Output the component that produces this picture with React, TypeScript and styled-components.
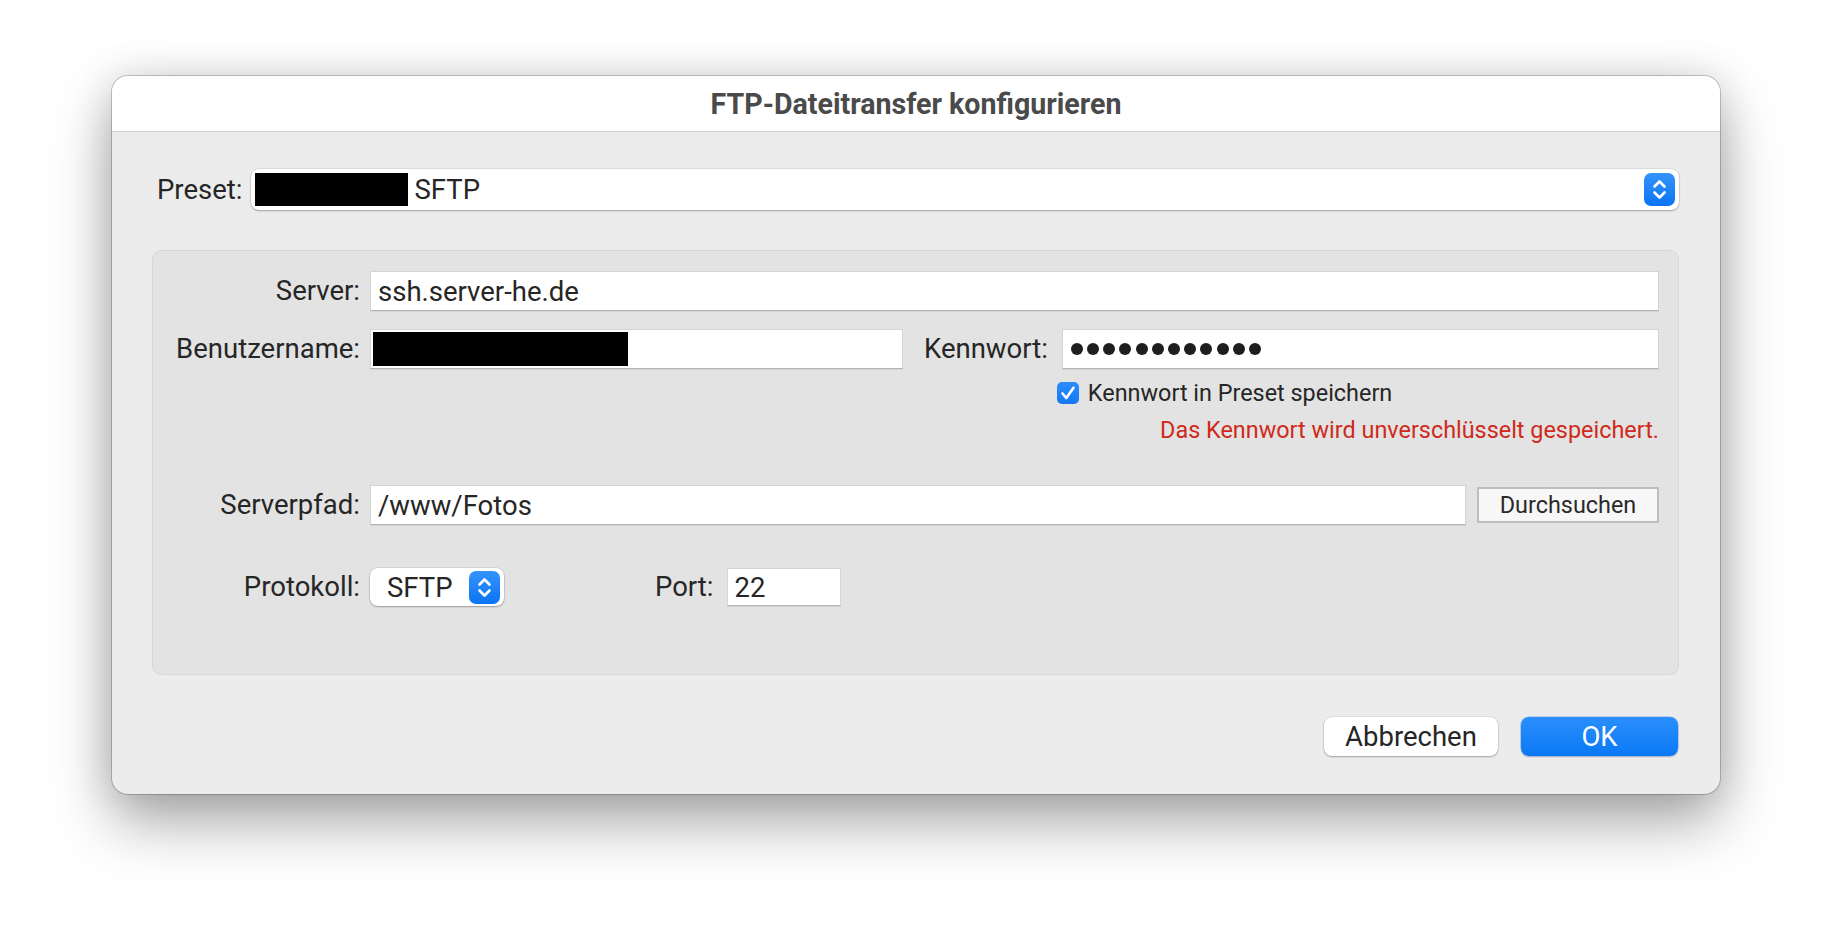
import React from "react";
import styled, { createGlobalStyle } from "styled-components";

const GlobalStyle = createGlobalStyle`
  html, body { margin: 0; padding: 0; background: #ffffff; }
  body { font-family: Roboto, "Liberation Sans", sans-serif; color: #262626; }
  * { box-sizing: border-box; }
`;

const Page = styled.div`
  width: 1832px;
  height: 942px;
  display: flex;
  justify-content: center;
  align-items: flex-start;
  padding-top: 76px;
  overflow: hidden;
  background: #ffffff;
`;

const Dialog = styled.div`
  width: 1608px;
  height: 718px;
  background: #ececec;
  border-radius: 16px;
  overflow: hidden;
  display: flex;
  flex-direction: column;
  box-shadow: 0 0 0 1px rgba(0, 0, 0, 0.2), 0 28px 60px rgba(0, 0, 0, 0.34),
    0 0 40px rgba(0, 0, 0, 0.12);
`;

const TitleBar = styled.div`
  flex: none;
  height: 56px;
  background: #ffffff;
  border-bottom: 1px solid #cdcdcd;
  display: flex;
  align-items: center;
  justify-content: center;
  font-size: 28.6px;
  font-weight: 700;
  color: #4a4a4a;
`;

const Body = styled.div`
  flex: 1;
  display: flex;
  flex-direction: column;
  padding: 37px 41px 38px 40px;
`;

const PresetRow = styled.div`
  display: flex;
  align-items: center;
  gap: 9px;
  padding-left: 5px;
  height: 41px;
`;

const Label = styled.div<{ $width?: number }>`
  flex: none;
  width: ${(p) => (p.$width ? `${p.$width}px` : "auto")};
  text-align: right;
  font-size: 27.5px;
  line-height: 40px;
  color: #262626;
  white-space: nowrap;
`;

const Popup = styled.div<{ $width?: number; $height: number; $pad: number; $ml?: number }>`
  flex: ${(p) => (p.$width ? "none" : "1")};
  width: ${(p) => (p.$width ? `${p.$width}px` : "auto")};
  height: ${(p) => p.$height}px;
  margin-left: ${(p) => p.$ml ?? 0}px;
  background: #ffffff;
  border-radius: 8px;
  box-shadow: 0 0 0 0.5px rgba(0, 0, 0, 0.12), 0 1px 2px rgba(0, 0, 0, 0.28);
  display: flex;
  align-items: center;
  padding: 0 4px 0 ${(p) => p.$pad}px;
  font-size: 27.5px;
  color: #262626;
`;

const PopupText = styled.span`
  flex: 1;
  white-space: nowrap;
`;

const Redacted = styled.span<{ $width: number; $height: number }>`
  flex: none;
  display: inline-block;
  width: ${(p) => p.$width}px;
  height: ${(p) => p.$height}px;
  background: #000000;
  margin-right: 6px;
`;

const Stepper = styled.span`
  flex: none;
  width: 31px;
  height: 33px;
  border-radius: 7px;
  background: linear-gradient(#3593fb, #0b74f3);
  display: flex;
  align-items: center;
  justify-content: center;
`;

const Group = styled.div`
  margin-top: 40px;
  height: 425px;
  background: #e3e3e3;
  border: 1px solid #d8d8d8;
  border-radius: 9px;
  padding: 20px 19px 0 0;
  display: flex;
  flex-direction: column;
`;

const Row = styled.div<{ $top?: number; $center?: boolean }>`
  display: flex;
  align-items: ${(p) => (p.$center ? "center" : "flex-start")};
  margin-top: ${(p) => p.$top ?? 0}px;
`;

const Field = styled.div<{ $width?: number; $height?: number; $ml?: number }>`
  flex: ${(p) => (p.$width ? "none" : "1")};
  width: ${(p) => (p.$width ? `${p.$width}px` : "auto")};
  height: ${(p) => p.$height ?? 40}px;
  margin-left: ${(p) => p.$ml ?? 10}px;
  background: #ffffff;
  border: 1px solid #d4d4d4;
  border-bottom-color: #b3b3b3;
  box-shadow: 0 1px 0 rgba(0, 0, 0, 0.06);
  display: flex;
  align-items: center;
  padding: 0 7px;
  font-size: 27.5px;
  color: #262626;
  white-space: nowrap;
  overflow: hidden;
`;

const RedactedField = styled(Field)`
  padding: 2px;
`;

const PasswordField = styled(Field)`
  flex: none;
  width: 100%;
  margin-left: 0;
`;

const PasswordColumn = styled.div`
  flex: 1;
  display: flex;
  flex-direction: column;
  margin-left: 14px;
`;

const Dots = styled.div`
  display: flex;
  gap: 4.2px;
  padding-left: 1px;
`;

const Dot = styled.span`
  width: 12px;
  height: 12px;
  border-radius: 50%;
  background: #1e1e1e;
`;

const CheckRow = styled.div`
  display: flex;
  align-items: center;
  gap: 9px;
  margin: 9px 0 0 -5px;
  height: 30px;
  font-size: 23.4px;
  color: #262626;
`;

const CheckBox = styled.span`
  flex: none;
  width: 22px;
  height: 22px;
  border-radius: 5px;
  background: linear-gradient(#2c8cfb, #1478f2);
  display: flex;
  align-items: center;
  justify-content: center;
`;

const Warning = styled.div`
  align-self: flex-end;
  margin-top: 7px;
  line-height: 30px;
  font-size: 23.4px;
  color: #d02a1a;
`;

const BrowseButton = styled.div`
  flex: none;
  width: 182px;
  height: 36px;
  margin-left: 11px;
  background: #f7f7f7;
  border: 2px solid #bdbdbd;
  display: flex;
  align-items: center;
  justify-content: center;
  font-size: 23.4px;
  color: #2a2a2a;
`;

const PortLabel = styled(Label)`
  margin-left: 151px;
`;

const KennwortLabel = styled(Label)`
  margin-left: 21px;
`;

const Footer = styled.div`
  margin-top: auto;
  display: flex;
  justify-content: flex-end;
  gap: 23px;
  padding-right: 1px;
`;

const Button = styled.div<{ $primary?: boolean; $width: number }>`
  width: ${(p) => p.$width}px;
  height: 39px;
  border-radius: 8px;
  display: flex;
  align-items: center;
  justify-content: center;
  font-size: 27.5px;
  color: ${(p) => (p.$primary ? "#ffffff" : "#262626")};
  background: ${(p) =>
    p.$primary ? "linear-gradient(#2b8ffd, #0a78f5)" : "#ffffff"};
  box-shadow: ${(p) =>
    p.$primary
      ? "0 0 0 0.5px rgba(0, 90, 220, 0.4), 0 1px 2px rgba(0, 0, 0, 0.18)"
      : "0 0 0 0.5px rgba(0, 0, 0, 0.12), 0 1px 2px rgba(0, 0, 0, 0.28)"};
`;

const StepperIcon = () => (
  <svg width="31" height="33" viewBox="0 0 31 33" fill="none">
    <path
      d="M10.5 13.5 L15.5 8.5 L20.5 13.5"
      stroke="#ffffff"
      strokeWidth="2.6"
      strokeLinecap="round"
      strokeLinejoin="round"
    />
    <path
      d="M10.5 19.5 L15.5 24.5 L20.5 19.5"
      stroke="#ffffff"
      strokeWidth="2.6"
      strokeLinecap="round"
      strokeLinejoin="round"
    />
  </svg>
);

const CheckIcon = () => (
  <svg width="22" height="22" viewBox="0 0 22 22" fill="none">
    <path
      d="M5.5 11.5 L9.3 16 L16.5 5.8"
      stroke="#ffffff"
      strokeWidth="2.6"
      strokeLinecap="round"
      strokeLinejoin="round"
    />
  </svg>
);

export default function App() {
  return (
    <>
      <GlobalStyle />
      <Page>
        <Dialog>
          <TitleBar>FTP-Dateitransfer konfigurieren</TitleBar>
          <Body>
            <PresetRow>
              <Label>Preset:</Label>
              <Popup $height={41} $pad={4}>
                <Redacted $width={153} $height={33} />
                <PopupText>SFTP</PopupText>
                <Stepper>
                  <StepperIcon />
                </Stepper>
              </Popup>
            </PresetRow>

            <Group>
              <Row>
                <Label $width={207}>Server:</Label>
                <Field>ssh.server-he.de</Field>
              </Row>

              <Row $top={18}>
                <Label $width={207}>Benutzername:</Label>
                <RedactedField $width={533}>
                  <Redacted $width={255} $height={34} />
                </RedactedField>
                <KennwortLabel>Kennwort:</KennwortLabel>
                <PasswordColumn>
                  <PasswordField>
                    <Dots>
                      {Array.from({ length: 12 }).map((_, i) => (
                        <Dot key={i} />
                      ))}
                    </Dots>
                  </PasswordField>
                  <CheckRow>
                    <CheckBox>
                      <CheckIcon />
                    </CheckBox>
                    Kennwort in Preset speichern
                  </CheckRow>
                  <Warning>Das Kennwort wird unverschlüsselt gespeichert.</Warning>
                </PasswordColumn>
              </Row>

              <Row $top={40} $center>
                <Label $width={207}>Serverpfad:</Label>
                <Field>/www/Fotos</Field>
                <BrowseButton>Durchsuchen</BrowseButton>
              </Row>

              <Row $top={42} $center>
                <Label $width={207}>Protokoll:</Label>
                <Popup $width={134} $height={38} $pad={17} $ml={10}>
                  <PopupText>SFTP</PopupText>
                  <Stepper>
                    <StepperIcon />
                  </Stepper>
                </Popup>
                <PortLabel>Port:</PortLabel>
                <Field $width={114} $height={38} $ml={13}>
                  22
                </Field>
              </Row>
            </Group>

            <Footer>
              <Button $width={174}>Abbrechen</Button>
              <Button $width={157} $primary>
                OK
              </Button>
            </Footer>
          </Body>
        </Dialog>
      </Page>
    </>
  );
}
